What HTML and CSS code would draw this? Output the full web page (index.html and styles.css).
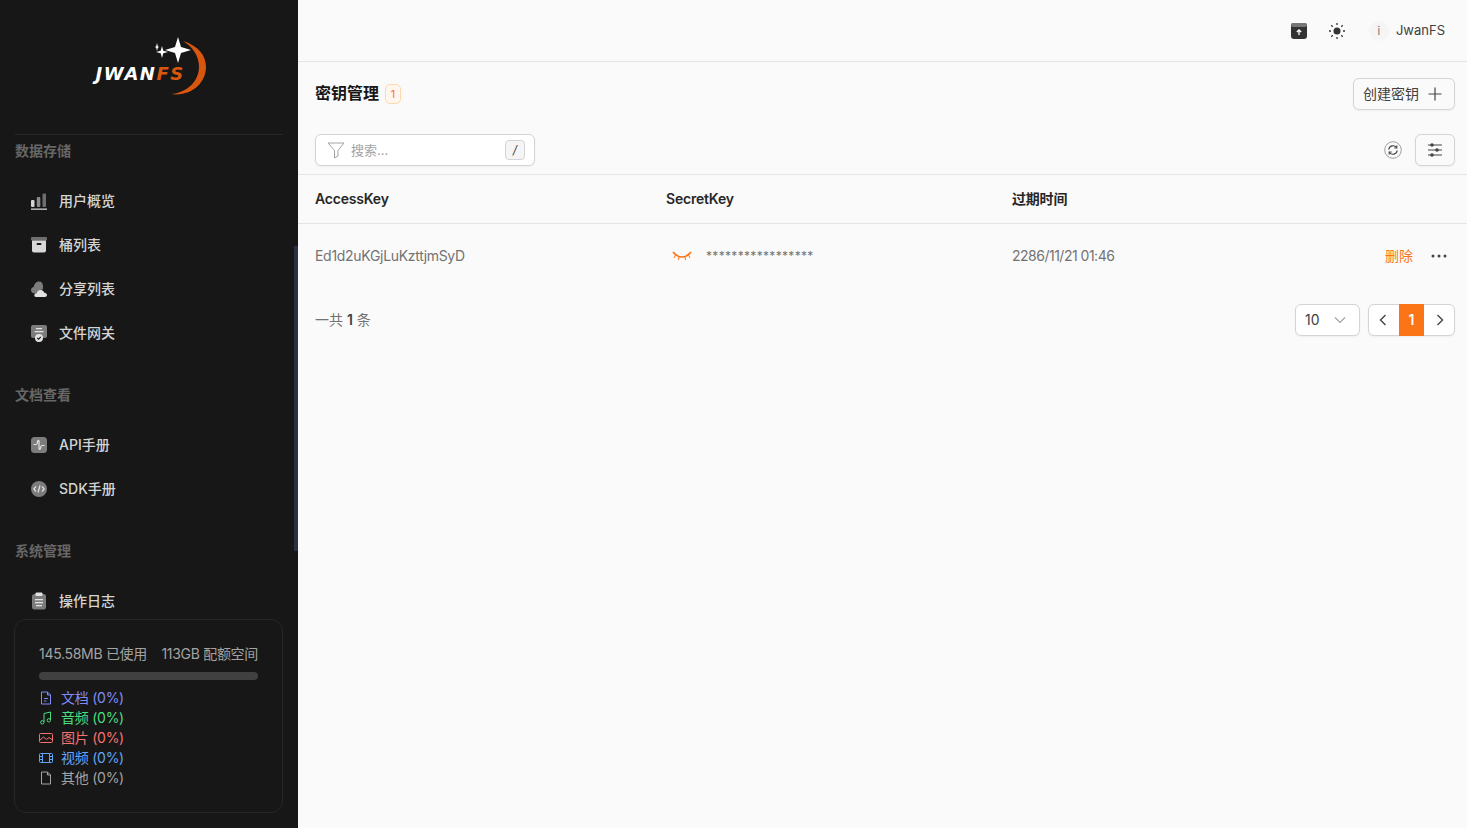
FILE: index.html
```html
<!DOCTYPE html>
<html>
<head>
    <title>JwanFS - 密钥管理</title>
    <link rel="stylesheet" href="styles.css">
</head>
<body>
    <aside class="sidebar">
        <div class="logo">
            <div class="logo-mark">
                <svg class="logo-art" width="120" height="70" viewBox="0 0 120 70">
                    <path d="M92 6C108 11 115 21 115 32C115 48 100 62 80 59C96 58 108 46 108 32C108 21 102 12 92 6Z" fill="#d9560f"/>
                    <path d="M87 2L90 12L100 15L90 18L87 28L84 18L74 15L84 12Z" fill="#fff"/>
                    <path d="M71 11L72.300 15.700L77 17L72.300 18.300L71 23L69.700 18.300L65 17L69.700 15.700Z" fill="#fff"/>
                    <path d="M66 8L66.800 11.200L68 12L66.800 12.800L66 16L65.200 12.800L64 12L65.200 11.200Z" fill="#fff"/>
                </svg>
                <span class="logo-text">JWAN<span class="logo-accent">FS</span></span>
            </div>
        </div>

        <div class="nav-title">数据存储</div>
        <ul class="nav-list">
            <li class="nav-item">
                <svg width="18" height="18" viewBox="0 0 18 18"><rect x="1" y="8" width="3.500" height="7" rx="1" fill="#d4d4d4"/><rect x="6.800" y="5" width="3.500" height="10" rx="1" fill="#8a8a8a"/><rect x="12.500" y="1.500" width="3.500" height="13.500" rx="1" fill="#6e6e6e"/><rect x="1" y="16.500" width="16" height="1.300" fill="#d4d4d4"/></svg>
                用户概览
            </li>
            <li class="nav-item">
                <svg width="18" height="18" viewBox="0 0 18 18"><rect x="1" y="1" width="16" height="3.500" rx="1" fill="#6e6e6e"/><path d="M2 4.500H16V14.500Q16 16.500 14 16.500H4Q2 16.500 2 14.500Z" fill="#d8d8d8"/><rect x="6.500" y="7" width="5" height="2" rx="1" fill="#171717"/></svg>
                桶列表
            </li>
            <li class="nav-item">
                <svg width="18" height="18" viewBox="0 0 18 18"><path d="M9 1.500C11.500 1.500 13 3.500 13 6L13 9L5 13.500C2.500 13.500 1 12 1 10C1 8.500 2.200 7.200 3.800 7C4 4 6 1.500 9 1.500Z" fill="#7c7c7c"/><path d="M6 17C4.500 17 4 15.800 4.500 14.500C5 13.500 6 13.300 6.500 13.300C7 11.300 8.500 10 10.500 10C13 10 14 11.700 14.300 12.800C16 12.800 17 14 17 15C17 16.300 16 17 15 17Z" fill="#e2e2e2"/></svg>
                分享列表
            </li>
            <li class="nav-item">
                <svg width="18" height="18" viewBox="0 0 18 18"><path d="M3 1H15Q17 1 17 3V12Q17 14 15 14H3Q1 14 1 12V3Q1 1 3 1Z" fill="#7c7c7c"/><rect x="6" y="4" width="6" height="1.300" fill="#e2e2e2"/><rect x="4.500" y="7" width="9" height="1.300" fill="#e2e2e2"/><circle cx="9" cy="14" r="4" fill="#e2e2e2"/><path d="M7.300 14L8.600 15.200L10.800 12.900" fill="none" stroke="#171717" stroke-width="1.200"/></svg>
                文件网关
            </li>
        </ul>

        <div class="nav-title">文档查看</div>
        <ul class="nav-list">
            <li class="nav-item">
                <svg width="18" height="18" viewBox="0 0 18 18"><rect x="1" y="1" width="16" height="16" rx="3.500" fill="#7c7c7c"/><path d="M3.500 8.500H6Q7 8.500 7.300 7L7.700 5Q8.500 3.500 9 5V12.500Q9.500 14 10.300 13L10.800 11Q11 9.500 12 9.500H14.500" fill="none" stroke="#e2e2e2" stroke-width="1.200"/></svg>
                API手册
            </li>
            <li class="nav-item">
                <svg width="18" height="18" viewBox="0 0 18 18"><circle cx="9" cy="9" r="8" fill="#7c7c7c"/><path d="M6 6.500L3.800 9L6 11.500M12 6.500L14.200 9L12 11.500M10 5.500L8 12.500" fill="none" stroke="#e2e2e2" stroke-width="1.200"/></svg>
                SDK手册
            </li>
        </ul>

        <div class="nav-title">系统管理</div>
        <ul class="nav-list">
            <li class="nav-item">
                <svg width="18" height="18" viewBox="0 0 18 18"><rect x="2" y="2" width="14" height="15.500" rx="2.500" fill="#7c7c7c"/><rect x="5.500" y="0.500" width="7" height="3.500" rx="1" fill="#e2e2e2"/><rect x="5" y="7" width="8" height="1.300" fill="#e2e2e2"/><rect x="5" y="10" width="8" height="1.300" fill="#e2e2e2"/><rect x="6" y="13" width="6" height="1.300" fill="#e2e2e2"/></svg>
                操作日志
            </li>
        </ul>

        <div class="scroll-thumb"></div>

        <div class="usage-card">
            <div class="usage-head">
                <span>145.58MB 已使用</span>
                <span>113GB 配额空间</span>
            </div>
            <div class="usage-bar"></div>
            <ul class="usage-list">
                <li class="usage-doc">
                    <svg width="14" height="14" viewBox="0 0 14 14" fill="none" stroke="currentColor"><path d="M2.500 1H8.500L11.500 4V13H2.500Z"/><path d="M8.500 1V4H11.500M5 7.500H9M5 10H7.500"/></svg>
                    文档 (0%)
                </li>
                <li class="usage-audio">
                    <svg width="14" height="14" viewBox="0 0 14 14" fill="none" stroke="currentColor"><path d="M5 11V2.500L11.500 1V9"/><circle cx="3.300" cy="11.300" r="1.700"/><circle cx="9.800" cy="9.300" r="1.700"/></svg>
                    音频 (0%)
                </li>
                <li class="usage-image">
                    <svg width="14" height="14" viewBox="0 0 14 14" fill="none" stroke="currentColor"><rect x="0.500" y="2.500" width="13" height="9" rx="1"/><path d="M1 9L4.500 6L7.500 8.500L10 6.500L13.500 9"/></svg>
                    图片 (0%)
                </li>
                <li class="usage-video">
                    <svg width="14" height="14" viewBox="0 0 14 14" fill="none" stroke="currentColor"><rect x="0.500" y="2.500" width="13" height="9" rx="1"/><path d="M3.500 2.500V11.500M10.500 2.500V11.500M0.500 5.500H3.500M0.500 8.500H3.500M10.500 5.500H13.500M10.500 8.500H13.500"/></svg>
                    视频 (0%)
                </li>
                <li class="usage-other">
                    <svg width="14" height="14" viewBox="0 0 14 14" fill="none" stroke="currentColor"><path d="M2.500 1H8.500L11.500 4V13H2.500Z"/><path d="M8.500 1V4H11.500"/></svg>
                    其他 (0%)
                </li>
            </ul>
        </div>
    </aside>

    <main class="main">
        <header class="topbar">
            <svg class="top-icon" width="18" height="18" viewBox="0 0 18 18"><rect x="1" y="1" width="16" height="16" rx="3" fill="#333"/><rect x="1" y="1" width="16" height="4" rx="2" fill="#777"/><path d="M9 13V8M6.800 10L9 7.800L11.200 10" fill="none" stroke="#fff" stroke-width="1.300"/></svg>
            <svg class="top-icon sun" width="18" height="18" viewBox="0 0 18 18"><circle cx="9" cy="9" r="3.500" fill="#333"/><path d="M9 1V3M9 15V17M1 9H3M15 9H17M3.300 3.300L4.700 4.700M13.300 13.300L14.700 14.700M3.300 14.700L4.700 13.300M13.300 4.700L14.700 3.300" stroke="#333" stroke-width="1.300"/></svg>
            <span class="avatar">i</span>
            <span class="user-name">JwanFS</span>
        </header>

        <div class="title-row">
            <h1 class="page-title">密钥管理</h1>
            <span class="count-badge">1</span>
            <button class="btn create-btn">
                <span class="btn-label">创建密钥</span>
                <svg width="16" height="16" viewBox="0 0 16 16"><path d="M8 1.500V14.500M1.500 8H14.500" stroke="#444" stroke-width="1.200"/></svg>
            </button>
        </div>

        <div class="filter-row">
            <div class="search-box">
                <svg width="18" height="18" viewBox="0 0 18 18"><path d="M1 2H17L11 9.500V15L7.500 17V9.500Z" fill="none" stroke="#a3a3a3"/></svg>
                <span class="search-text">搜索...</span>
                <span class="kbd">/</span>
            </div>
            <svg class="refresh" width="18" height="18" viewBox="0 0 18 18" fill="none" stroke="#444"><circle cx="9" cy="9" r="8.300" stroke="#888" stroke-width="0.800"/><path d="M4.800 8.500A4.300 4.300 0 0 1 12.500 6.500M13.200 9.500A4.300 4.300 0 0 1 5.500 11.500" stroke-width="1.200"/><path d="M12.800 4.500V7H10.300M5.200 13.500V11H7.700" stroke-width="1.200"/></svg>
            <button class="btn icon-btn">
                <svg width="16" height="16" viewBox="0 0 16 16" fill="#444"><path d="M1 3H15M1 8H15M1 13H15" stroke="#444"/><circle cx="5" cy="3" r="1.800"/><circle cx="10" cy="8" r="1.800"/><circle cx="5" cy="13" r="1.800"/></svg>
            </button>
        </div>

        <div class="table-row table-head">
            <div>AccessKey</div>
            <div>SecretKey</div>
            <div>过期时间</div>
            <div></div>
        </div>
        <div class="table-row table-body">
            <div class="key-cell">Ed1d2uKGjLuKzttjmSyD</div>
            <div class="secret-cell">
                <svg width="20" height="12" viewBox="0 0 20 12" fill="none" stroke="#fb7516" stroke-width="1.600"><path d="M1 2Q5 7 10 7Q15 7 19 2" /><path d="M3.500 5L2 8M7 7L6.500 10M13 7L13.500 10M16.500 5L18 8" stroke-width="1"/></svg>
                <span class="stars">*****************</span>
            </div>
            <div class="date-cell">2286/11/21 01:46</div>
            <div class="actions">
                <span class="delete-link">删除</span>
                <svg width="16" height="4" viewBox="0 0 16 4" fill="#444"><circle cx="2" cy="2" r="1.500"/><circle cx="8" cy="2" r="1.500"/><circle cx="14" cy="2" r="1.500"/></svg>
            </div>
        </div>

        <div class="pager-row">
            <span class="total">一共 <b>1</b> 条</span>
            <div class="page-size">
                10
                <svg width="12" height="8" viewBox="0 0 12 8"><path d="M1 1.500L6 6.500L11 1.500" fill="none" stroke="#a3a3a3" stroke-width="1.200"/></svg>
            </div>
            <div class="pager">
                <span class="pager-btn pager-prev"><svg width="8" height="12" viewBox="0 0 8 12"><path d="M6.500 1L1.500 6L6.500 11" fill="none" stroke="#444" stroke-width="1.400"/></svg></span>
                <span class="pager-current">1</span>
                <span class="pager-btn pager-next"><svg width="8" height="12" viewBox="0 0 8 12"><path d="M1.500 1L6.500 6L1.500 11" fill="none" stroke="#444" stroke-width="1.400"/></svg></span>
            </div>
        </div>
    </main>
</body>
</html>
```

FILE: styles.css
```css
* {
    box-sizing: border-box;
}

body {
    margin: 0;
    height: 828px;
    overflow: hidden;
    display: flex;
    background-color: #fafafa;
    color: #404040;
    font-family: Inter, "Noto Sans CJK SC", sans-serif;
    font-size: 14px;
    line-height: 20px;
}

ul {
    list-style: none;
    margin: 0;
    padding: 0;
}

svg {
    display: block;
    flex-shrink: 0;
}

/* sidebar */
.sidebar {
    position: relative;
    width: 298px;
    height: 828px;
    flex-shrink: 0;
    padding: 0 15px;
    background-color: #171717;
    overflow: hidden;
}

.logo {
    height: 135px;
    border-bottom: 1px solid #262626;
    display: flex;
    justify-content: center;
}

.logo-mark {
    position: relative;
    width: 120px;
    height: 70px;
    margin-top: 35px;
    margin-left: 3px;
}

.logo-text {
    position: absolute;
    left: 5px;
    top: 29px;
    font-family: "DejaVu Sans", sans-serif;
    font-size: 18px;
    font-weight: 700;
    font-style: italic;
    letter-spacing: 1.5px;
    color: #fff;
    white-space: nowrap;
}

.logo-accent {
    color: #d9560f;
}

.nav-title {
    height: 32px;
    line-height: 32px;
    font-weight: 700;
    color: #666;
    margin-bottom: 12px;
}

.nav-list {
    margin-bottom: 24px;
}

.nav-item {
    display: flex;
    align-items: center;
    gap: 11px;
    height: 44px;
    padding-left: 15px;
    color: #d4d4d4;
    font-weight: 500;
}

.scroll-thumb {
    position: absolute;
    right: 0;
    top: 246px;
    width: 4px;
    height: 305px;
    background-color: #2a3242;
}

.usage-card {
    position: absolute;
    left: 14px;
    top: 619px;
    width: 269px;
    height: 194px;
    padding: 24px;
    background-color: #171717;
    border: 1px solid #262626;
    border-radius: 12px;
    color: #a3a3a3;
}

.usage-head {
    display: flex;
    justify-content: space-between;
    letter-spacing: -0.3px;
    white-space: nowrap;
}

.usage-bar {
    height: 8px;
    margin: 8px 0;
    border-radius: 4px;
    background-color: #404040;
}

.usage-list li {
    display: flex;
    align-items: center;
    gap: 8px;
    height: 20px;
    letter-spacing: -0.25px;
}

.usage-doc { color: #818cf8; }
.usage-audio { color: #4ade80; }
.usage-image { color: #f87171; }
.usage-video { color: #60a5fa; }
.usage-other { color: #a3a3a3; }

/* main area */
.main {
    flex: 1;
    min-width: 0;
}

.topbar {
    height: 62px;
    display: flex;
    align-items: center;
    justify-content: flex-end;
    padding-right: 22px;
    border-bottom: 1px solid #e5e5e5;
}

.sun {
    margin-left: 20px;
}

.avatar {
    width: 20px;
    height: 20px;
    margin-left: 23px;
    border-radius: 50%;
    background-color: #f5f5f5;
    color: #737373;
    font-size: 11px;
    line-height: 20px;
    text-align: center;
}

.user-name {
    margin-left: 7px;
    margin-bottom: 2px;
    font-size: 13px;
}

.title-row {
    display: flex;
    align-items: center;
    height: 64px;
    padding: 0 12px 0 17px;
}

.page-title {
    margin: 0 0 2px;
    font-size: 16px;
    font-weight: 700;
    color: #171717;
}

.count-badge {
    width: 16px;
    height: 20px;
    margin-left: 6px;
    border: 1px solid #fed7aa;
    border-radius: 5px;
    background-color: #fff7ed;
    color: #fb7516;
    font-size: 11px;
    line-height: 18px;
    text-align: center;
}

.btn {
    display: flex;
    align-items: center;
    justify-content: center;
    height: 32px;
    padding: 0;
    background-color: #fafafa;
    border: 1px solid #d4d4d4;
    border-radius: 6px;
    box-shadow: 0 1px 2px rgba(0,0,0,0.05);
    color: #404040;
    font-family: inherit;
    font-size: 14px;
}

.btn-label {
    margin-bottom: 2px;
}

.create-btn {
    width: 102px;
    gap: 8px;
    margin-left: auto;
    padding-right: 2px;
}

.icon-btn {
    width: 40px;
}

.filter-row {
    display: flex;
    align-items: center;
    height: 49px;
    padding: 0 12px 0 17px;
    border-bottom: 1px solid #e5e5e5;
}

.search-box {
    display: flex;
    align-items: center;
    width: 220px;
    height: 32px;
    padding: 0 9px 0 11px;
    background-color: #fff;
    border: 1px solid #d4d4d4;
    border-radius: 6px;
    box-shadow: 0 1px 2px rgba(0,0,0,0.05);
}

.search-text {
    margin-left: 6px;
    color: #a3a3a3;
    font-size: 13px;
}

.kbd {
    width: 20px;
    height: 20px;
    margin-left: auto;
    background-color: #f5f5f5;
    border: 1px solid #d4d4d4;
    border-radius: 4px;
    color: #404040;
    font-size: 12px;
    font-style: italic;
    line-height: 18px;
    text-align: center;
}

.refresh {
    margin-left: auto;
    margin-right: 13px;
}

.table-row {
    display: grid;
    grid-template-columns: 351px 346px 1fr 120px;
    align-items: center;
    padding: 0 12px 0 17px;
}

.table-head {
    height: 49px;
    border-bottom: 1px solid #e5e5e5;
    color: #262626;
    font-weight: 600;
    letter-spacing: -0.2px;
}

.table-body {
    height: 64px;
    color: #737373;
}

.key-cell {
    letter-spacing: -0.3px;
}

.date-cell {
    letter-spacing: -0.5px;
}

.secret-cell {
    display: flex;
    align-items: center;
    gap: 14px;
    padding-left: 6px;
}

.stars {
    font-size: 12px;
    letter-spacing: 0.32px;
}

.actions {
    display: flex;
    align-items: center;
    justify-content: flex-end;
    gap: 18px;
    padding-right: 8px;
}

.delete-link {
    color: #fb7516;
}

.pager-row {
    display: flex;
    align-items: center;
    height: 64px;
    padding: 0 12px 0 17px;
}

.total {
    color: #737373;
    margin-right: auto;
}

.total b {
    color: #404040;
    font-weight: 600;
}

.page-size {
    display: flex;
    align-items: center;
    justify-content: space-between;
    width: 65px;
    height: 32px;
    padding: 0 13px 0 9px;
    background-color: #fff;
    border: 1px solid #d4d4d4;
    border-radius: 6px;
    box-shadow: 0 1px 2px rgba(0,0,0,0.05);
}

.pager {
    display: flex;
    height: 32px;
    margin-left: 8px;
    background-color: #fff;
    border: 1px solid #d4d4d4;
    border-radius: 6px;
    box-shadow: 0 1px 2px rgba(0,0,0,0.05);
}

.pager-btn {
    width: 30px;
    display: flex;
    align-items: center;
    justify-content: center;
}

.pager-prev {
    padding-right: 2px;
}

.pager-next {
    padding-left: 2px;
}

.pager-current {
    width: 25px;
    margin: -1px 0;
    background-color: #fb7516;
    color: #fff;
    font-weight: 600;
    line-height: 32px;
    text-align: center;
}
```
